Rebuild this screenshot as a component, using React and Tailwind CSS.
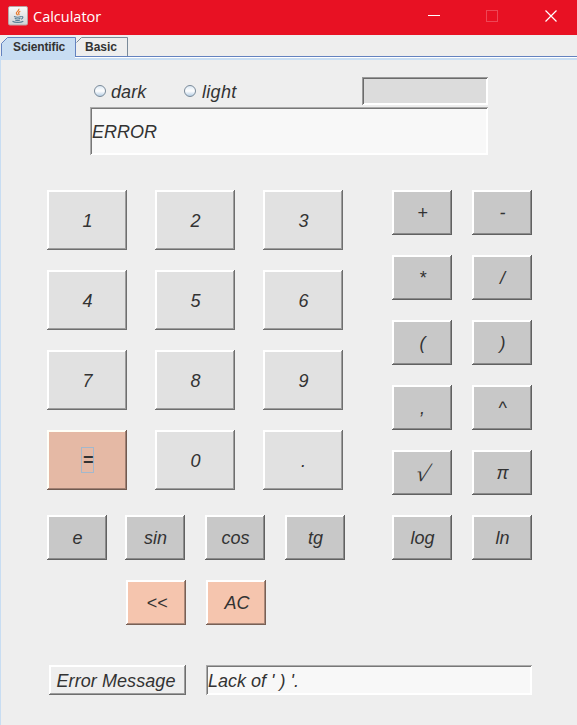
const raisedLight =
  'shadow-[inset_-1px_-1px_0_#6e6e6e,inset_1px_1px_0_#fff,inset_-2px_-2px_0_#9d9d9d,inset_2px_2px_0_#fff]';
const raisedGray =
  'shadow-[inset_-1px_-1px_0_#616161,inset_1px_1px_0_#fff,inset_-2px_-2px_0_#8b8b8b,inset_2px_2px_0_#fff]';
const raisedPeach =
  'shadow-[inset_-1px_-1px_0_#786055,inset_1px_1px_0_#fff,inset_-2px_-2px_0_#ab897a,inset_2px_2px_0_#fff]';
const raisedEquals =
  'shadow-[inset_-1px_-1px_0_#705a50,inset_1px_1px_0_#fffffa,inset_-2px_-2px_0_#a08073,inset_2px_2px_0_#fffff5]';
const lowered =
  'shadow-[inset_1px_1px_0_#ababab,inset_-1px_-1px_0_#fff,inset_2px_2px_0_#777,inset_-2px_-2px_0_#fff]';
const loweredGray =
  'shadow-[inset_1px_1px_0_#999,inset_-1px_-1px_0_#fff,inset_2px_2px_0_#6b6b6b,inset_-2px_-2px_0_#fff]';

const digits = ['1', '2', '3', '4', '5', '6', '7', '8', '9', '=', '0', '.'];
const operators = ['+', '-', '*', '/', '(', ')', ',', '^', '√', 'π', 'log', 'ln'];

function Key({ className, children }) {
  return (
    <button type="button" className={`flex shrink-0 items-center justify-center whitespace-pre italic ${className}`}>
      {children}
    </button>
  );
}

function FunctionKey({ label, className = '' }) {
  return (
    <Key className={`h-[45px] w-[60px] bg-[#c8c8c8] pt-0.5 pl-px ${raisedGray} ${className}`}>
      {label === '√' ? (
        <span className="ml-px inline-block -skew-x-[16deg] scale-x-110 font-['Liberation_Serif',serif] text-[22px] leading-[21px]">√</span>
      ) : (
        label
      )}
    </Key>
  );
}

function Radio({ label, className }) {
  return (
    <label className="flex h-7 w-[90px] items-center gap-[5px]">
      <span className="size-3 rounded-full border border-[#7a8a99] bg-linear-to-b from-[#dce8f3] via-white to-[#b8cfe5]" />
      <span className={`pt-0.5 ${className}`}>{label}</span>
    </label>
  );
}

function JavaIcon() {
  return (
    <svg width="20" height="20" viewBox="0 0 20 20" fill="none">
      <defs>
        <linearGradient id="tile" x1="0" y1="0" x2="0" y2="1">
          <stop offset="0" stopColor="#fafafa" />
          <stop offset="1" stopColor="#cfd3d5" />
        </linearGradient>
      </defs>
      <rect x="0.5" y="0.5" width="19" height="18.5" rx="1.5" fill="url(#tile)" stroke="#b9a5a5" />
      <path d="M10.8 2.8c1 2-3.3 3-2.400 4.700.3.700 1 1.200 1.200 1.800M12.300 5.300c-1.800 1-2.300 1.700-1.400 2.600.4.500.1.900-.4 1.200" stroke="#e8792b" strokeWidth="1.200" />
      <path d="M6 10.500c2 .8 5.500.7 7 0M6.700 12.300c1.700.8 4.300.8 5.700 0M7.200 14c1.500.7 3.500.7 4.700 0M13.300 10.600c2.300-.4 2 1.900-.3 2.600M4.500 15.300c2 1.500 8.500 1.500 10.800 0" stroke="#5a7f96" strokeWidth="1.100" />
    </svg>
  );
}

export default function App() {
  return (
    <div className="flex h-[725px] w-[577px] flex-col overflow-hidden bg-[#eee] font-['Liberation_Sans',Arial,sans-serif] text-[18px] leading-[21px] text-[#333]">
      <header className="flex h-[35px] shrink-0 items-center bg-[#e81123] pl-2 text-white">
        <div className="mb-1 h-5">
          <JavaIcon />
        </div>
        <span className="ml-[5px] mb-0.5 grow font-['Open_Sans','Noto_Sans',sans-serif] text-[14.500px] leading-5">Calculator</span>
        <svg width="150" height="35" viewBox="0 0 150 35" fill="none" shapeRendering="crispEdges">
          <path d="M1 15.500h12" stroke="#fff" />
          <rect x="59.500" y="10.500" width="11" height="11" stroke="#ee4655" />
          <path d="m118.500 10.500 11 11m0-11-11 11" stroke="#fff" strokeWidth="1.200" shapeRendering="auto" />
        </svg>
      </header>

      <nav className="mt-0.5 flex h-[19px] shrink-0 pl-px text-xs leading-[19px] font-bold">
        <div className="relative w-[75px] pt-px pl-3 tracking-[-0.12px]">
          <svg className="absolute top-0 left-0" width="75" height="19" fill="#c8ddf2" stroke="#6382bf">
            <path d="M.5 19V6.500L6.500.5h68V19" />
          </svg>
          <span className="relative">Scientific</span>
        </div>
        <div className="relative w-[52px] pt-px pl-[9px]">
          <svg className="absolute top-0 left-0" width="52" height="19" fill="none" stroke="#7a8a99">
            <path d="M.5 5.500 5.500.5h46V19" />
          </svg>
          <span className="relative">Basic</span>
        </div>
      </nav>
      <div className="h-px shrink-0 bg-linear-to-r from-[#c8ddf2] from-[75px] to-[#6382bf] to-[75px]" />
      <div className="h-px shrink-0 bg-linear-to-r from-[#c8ddf2] from-[75px] to-white to-[75px]" />
      <div className="h-0.5 shrink-0 bg-[#c8ddf2]" />

      <main className="grow border-l border-[#c8ddf2] italic">
        <div className="mt-[17px] ml-[89px] w-[398px]">
          <div className="flex h-7 items-center pl-1">
            <Radio label="dark" className="tracking-[0.1px]" />
            <Radio label="light" className="pl-px tracking-[0.3px]" />
            <div className={`ml-auto h-7 w-[126px] bg-[#dcdcdc] ${loweredGray}`} />
          </div>
          <div className={`mt-0.5 flex h-12 items-center bg-[#f8f8f8] pt-0.5 pl-0.5 ${lowered}`}>ERROR</div>
        </div>

        <div className="mt-[35px] ml-[46px] flex gap-[47px]">
          <div className="w-[298px]">
            <div className="grid grid-cols-[80px_80px_80px] gap-x-7 gap-y-5">
              {digits.map((d) =>
                d === '=' ? (
                  <Key key={d} className={`h-[60px] bg-[#e5b9a5] pl-px ${raisedEquals}`}>
                    <span className="flex h-[26px] w-[13px] items-center justify-center border border-[#a3b8cc] pl-px font-bold">=</span>
                  </Key>
                ) : (
                  <Key key={d} className={`h-[60px] bg-[#e1e1e1] pt-0.5 pl-px ${raisedLight}`}>{d}</Key>
                ),
              )}
            </div>
            <div className="mt-[25px] flex">
              <FunctionKey label="e" />
              <FunctionKey label="sin" className="ml-[18px]" />
              <FunctionKey label="cos" className="ml-5" />
              <FunctionKey label="tg" className="ml-5" />
            </div>
            <div className="mt-5 ml-[79px] flex gap-5">
              <Key className={`h-[45px] w-[60px] bg-[#f5c5ae] pt-0.5 pl-0.5 ${raisedPeach}`}>{'<<'}</Key>
              <Key className={`h-[45px] w-[60px] bg-[#f5c5ae] pt-0.5 pl-0.5 ${raisedPeach}`}>AC</Key>
            </div>
          </div>
          <div className="grid auto-rows-[45px] grid-cols-[60px_60px] content-start gap-5">
            {operators.map((op) => (
              <FunctionKey key={op} label={op} />
            ))}
          </div>
        </div>

        <div className="mt-10 ml-12 flex gap-5">
          <Key className={`h-[30px] w-[137px] bg-[#eee] pt-0.5 pr-[3px] tracking-[0.07px] ${raisedLight}`}>Error Message</Key>
          <div className={`flex h-[30px] w-[326px] items-center bg-[#f8f8f8] pt-0.5 pl-0.5 ${lowered}`}>{"Lack of ' ) '."}</div>
        </div>
      </main>
    </div>
  );
}
